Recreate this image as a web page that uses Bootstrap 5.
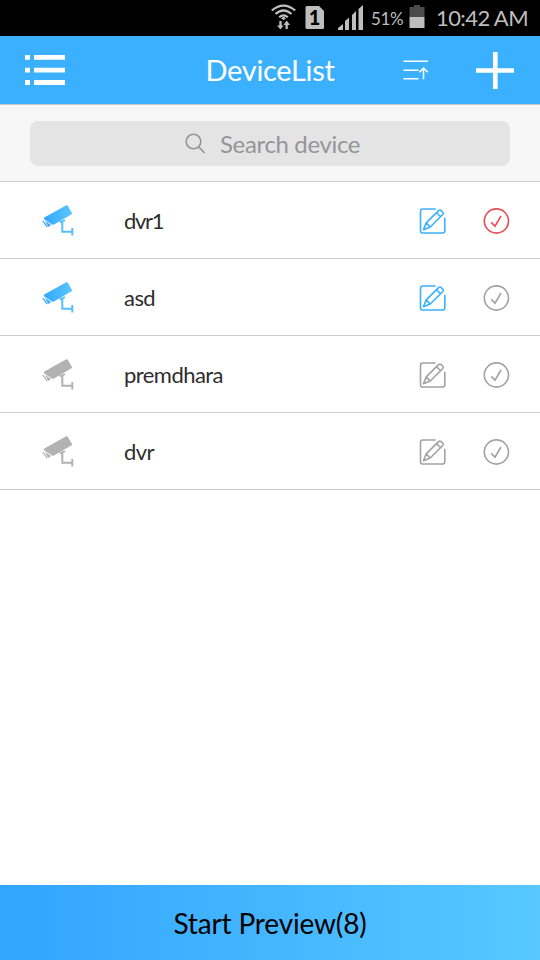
<!DOCTYPE html>
<html lang="en">
<head>
<meta charset="utf-8">
<meta name="viewport" content="width=device-width, initial-scale=1">
<title>DeviceList</title>
<link href="https://cdn.jsdelivr.net/npm/bootstrap@5.3.0/dist/css/bootstrap.min.css" rel="stylesheet">
<style>
body{font-family:Lato,"Open Sans",sans-serif;background:#fff;overflow:hidden}
svg{display:block;flex:none}
button{border:0;background:none;padding:0}
.statusbar{height:36px;background:#000;color:#bebebe;padding-right:12px}
.pct{font-size:17px;line-height:20px;letter-spacing:-.4px;width:33px;margin:1px 5px 0 8px;white-space:nowrap}
.clock{font-size:22px;line-height:24px;letter-spacing:-.6px;width:92px;margin-left:11px;white-space:nowrap}
.topbar{height:69px;background:#3bb0ff;border-bottom:1px solid #c8c8c8;display:grid;grid-template-columns:180px 180px 180px}
.topbar h1{font-size:29px;line-height:34px;letter-spacing:-.3px;font-weight:400}
.add{margin-left:46px;margin-right:26px}
.searchwrap{height:77px;background:#f7f7f7;border-bottom:1px solid #cdcdcd;padding:16px 30px 15px}
.searchbox{height:45px;background:#e4e4e4;border-radius:8px;color:#959598;font-size:24px;letter-spacing:-.35px;padding-left:155px}
.searchlabel{margin-left:15px}
.device{height:77px;padding:1px 30px 0 40px!important;border:0;border-bottom:1px solid #cdcdcd!important;border-radius:0!important;color:#2d2d2d}
.device-name{font-size:22px;line-height:32px;letter-spacing:-.55px;margin-left:48px}
.has-digit{letter-spacing:-1.3px}
.check{margin-left:35px}
.on{color:#3bb0ff}.off{color:#a2a2a2}.picked{color:#ea4c55}
.cam-off{color:#b2b2b2}
.preview{height:75px;background:linear-gradient(90deg,#30a4ff,#58c8ff);color:#000;font-size:28px;letter-spacing:-.15px}
</style>
<script src="https://cdn.jsdelivr.net/npm/bootstrap@5.3.0/dist/js/bootstrap.bundle.min.js"></script>
</head>
<body>
<svg width="0" height="0" class="position-absolute" aria-hidden="true">
  <defs>
    <linearGradient id="sky" gradientUnits="userSpaceOnUse" x1="2" y1="0" x2="33" y2="0"><stop stop-color="#30a4ff"/><stop offset="1" stop-color="#5ac8ff"/></linearGradient>
    <symbol id="camera" viewBox="0 0 36 36">
      <path d="M4.300 14.600 26.300 2.300q.8-.4 1.300.3l4.400 7.300q.4.8-.4 1.300L14 21.400q-1 .5-2 0l-7.700-5q-.9-.9 0-1.800z" stroke="none"/>
      <path d="M4.900 17.700l6.300 4.200-2.800 2zM2.200 18l1.300-.1 4.300 5.700-1 .9z" stroke="none"/>
      <path d="M19.700 19.400 25 17.100M22.300 18.600V28.700H32.300M32.300 25.100V32.400" fill="none" stroke-width="2"/>
    </symbol>
    <symbol id="edit" viewBox="0 0 28 28">
      <path d="M16.700 2H3.800Q1.500 2 1.500 4.300V23.700Q1.500 26 3.800 26H23Q25.800 26 25.800 23.700V10.700M4.500 22.700 7.200 15.900 19.800 3.400Q21 2.500 22.200 3.600L23.900 5.300Q24.800 6.400 23.800 7.500L11.200 20ZM7.200 15.900 11.200 20M17.600 5.700 21.600 9.700" fill="none" stroke="currentColor" stroke-width="1.600" stroke-linejoin="round"/>
    </symbol>
    <symbol id="check" viewBox="0 0 28 28">
      <g fill="none" stroke="currentColor" stroke-width="1.600"><circle cx="14.400" cy="14" r="12.100"/><path d="M9.200 15.400 13 19.100 19 9"/></g>
    </symbol>
  </defs>
</svg>
<div class="d-flex flex-column vh-100">
  <div class="statusbar d-flex align-items-center justify-content-end">
    <svg width="92" height="36" viewBox="0 0 92 36" fill="#bebebe">
      <g fill="none" stroke="#bebebe" stroke-width="2.200"><path d="M.8 10.500Q12.500 .8 24.200 10.500M4.500 14Q12.500 7 20.500 14M8.200 17.300Q12.500 13.300 16.800 17.300"/></g>
      <path d="M10 18.500 12.500 16.500 15 18.500 12.500 20ZM8.300 21H10.700V25.500H12.500L9.500 29.500 6 25.500H8.300zM14.500 29V25H12.500L15.700 20.500 19 25H16.800V29z"/>
      <path d="M34.500 7.500Q34.500 6 36 6H48L53 11V27.500Q53 29 51.500 29H36Q34.500 29 34.500 27.500z"/>
      <text x="43.500" y="24.500" fill="#000" font-size="20" font-weight="900" text-anchor="middle">1</text>
      <path d="M67 30V28L72 24V30zM74 30V21L78 17.500V30zM81 30V15L85 11V30zM87.500 30V9L92 5V30z"/>
    </svg>
    <span class="pct">51%</span>
    <svg width="16" height="36" viewBox="0 0 16 36"><path d="M5 5H11V7H15.500V17H.5V7H5z" fill="#4b4b4b"/><path d="M.5 17H15.500V28H.5z" fill="#bebebe"/></svg>
    <span class="clock">10:42 AM</span>
  </div>
  <header class="topbar text-white align-items-center">
    <button type="button" aria-label="Menu" class="ps-4 ms-0"><svg width="42" height="32" viewBox="0 0 42 32" fill="#fff"><path d="M1 1H6V5.700H1zM10 1H41V5.700H10zM1 13.700H6V18.500H1zM10 13.700H41V18.500H10zM1 26H6V31H1zM10 26H41V31H10z"/></svg></button>
    <h1 class="m-0 text-center">DeviceList</h1>
    <div class="d-flex align-items-center justify-content-end">
      <button type="button" aria-label="Sort"><svg width="28" height="24" viewBox="0 0 28 24" fill="none" stroke="#fff" stroke-width="1.500"><path d="M1.500 3.300H26M1.500 12.300H16.500M1.500 20.800H16.500M21.500 21.300V10.800M17.300 14.300 21.500 10.100 25.700 14.300"/></svg></button>
      <button type="button" aria-label="Add" class="add"><svg width="38" height="38" viewBox="0 0 38 38" stroke="#fff" stroke-width="4.700"><path d="M0 19.500H38M19.300 1V38"/></svg></button>
    </div>
  </header>
  <div class="searchwrap">
    <div class="searchbox d-flex align-items-center">
      <svg width="20" height="22" viewBox="0 0 20 22" fill="none" stroke="#959598" stroke-width="1.600"><circle cx="8.500" cy="8.500" r="7.300"/><path d="M13.500 13.800 19.500 20"/></svg>
      <span class="searchlabel">Search device</span>
    </div>
  </div>
  <div class="list-group list-group-flush">
    <div class="list-group-item device d-flex align-items-center">
      <svg width="36" height="36" fill="url(#sky)" stroke="#55c0ff"><use href="#camera"/></svg>
      <span class="device-name has-digit me-auto">dvr1</span>
      <svg class="on" width="28" height="28"><use href="#edit"/></svg>
      <svg class="picked check" width="28" height="28"><use href="#check"/></svg>
    </div>
    <div class="list-group-item device d-flex align-items-center">
      <svg width="36" height="36" fill="url(#sky)" stroke="#55c0ff"><use href="#camera"/></svg>
      <span class="device-name me-auto">asd</span>
      <svg class="on" width="28" height="28"><use href="#edit"/></svg>
      <svg class="off check" width="28" height="28"><use href="#check"/></svg>
    </div>
    <div class="list-group-item device d-flex align-items-center">
      <svg class="cam-off" width="36" height="36" fill="currentColor" stroke="currentColor"><use href="#camera"/></svg>
      <span class="device-name me-auto">premdhara</span>
      <svg class="off" width="28" height="28"><use href="#edit"/></svg>
      <svg class="off check" width="28" height="28"><use href="#check"/></svg>
    </div>
    <div class="list-group-item device d-flex align-items-center">
      <svg class="cam-off" width="36" height="36" fill="currentColor" stroke="currentColor"><use href="#camera"/></svg>
      <span class="device-name me-auto">dvr</span>
      <svg class="off" width="28" height="28"><use href="#edit"/></svg>
      <svg class="off check" width="28" height="28"><use href="#check"/></svg>
    </div>
  </div>
  <button type="button" class="preview w-100 mt-auto">Start Preview(8)</button>
</div>
</body>
</html>
